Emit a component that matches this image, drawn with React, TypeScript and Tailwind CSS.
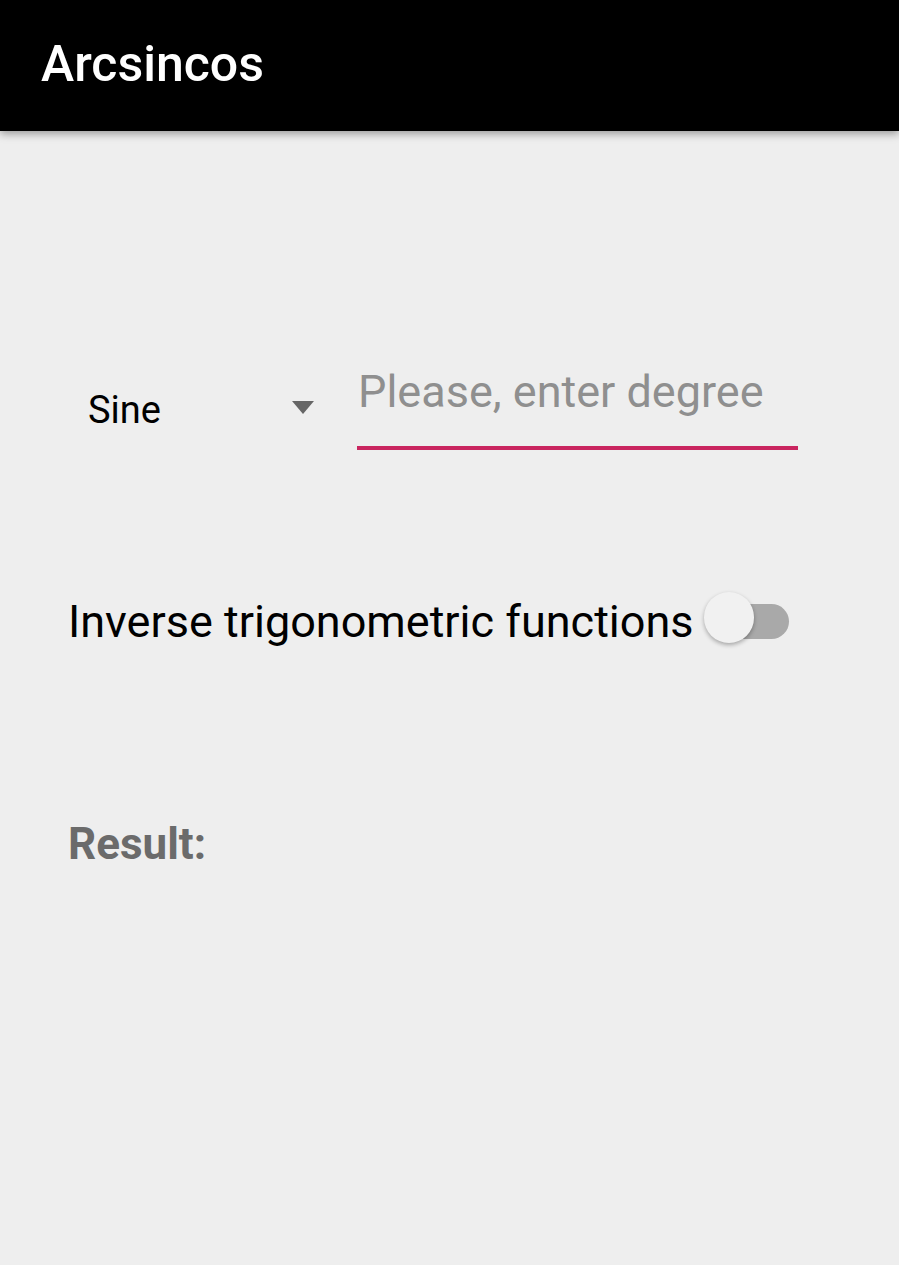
export default function App() {
  return (
    <div className="min-h-[1265px] w-full bg-[#eeeeee] font-['Roboto',sans-serif]">
      <header className="relative h-[131px] bg-black pl-[41px] pt-[39px] shadow-[0_3px_8px_rgba(0,0,0,0.35)]">
        <h1 className="text-[50px] font-medium leading-none text-white">Arcsincos</h1>
      </header>

      <main className="px-[68px]">
        {/* spinner + degree input */}
        <div className="mt-[238px] flex items-start">
          <div className="flex w-[289px] items-start justify-between pl-[20px] pr-[43px]">
            <span className="mt-[22px] text-[38px] leading-none text-black">Sine</span>
            <svg className="mt-[32px]" width="22" height="13" viewBox="0 0 22 13">
              <path d="M0 0 L22 0 L11 13 Z" fill="#666666" />
            </svg>
          </div>
          <div className="w-[441px]">
            <div className="pl-[1px] text-[45px] leading-none text-[#8f8f8f]">Please, enter degree</div>
            <div className="mt-[32px] h-[4px] bg-[#c9255f]" />
          </div>
        </div>

        {/* switch row */}
        <div className="mt-[146px] flex items-center">
          <span className="text-[45px] leading-none text-black">Inverse trigonometric functions</span>
          <div className="relative ml-[10px] h-[50px] w-[85px]">
            <div className="absolute left-[13px] top-[8px] h-[35px] w-[72px] rounded-full bg-[#a9a9a9]" />
            <div className="absolute left-0 top-[-4px] h-[51px] w-[50px] rounded-full bg-[#f1f1f1] shadow-[0_2px_4px_rgba(0,0,0,0.3)]" />
          </div>
        </div>

        <div className="mt-[176px] text-[44px] font-bold leading-none text-[#6b6b6b]">Result:</div>
      </main>
    </div>
  );
}
